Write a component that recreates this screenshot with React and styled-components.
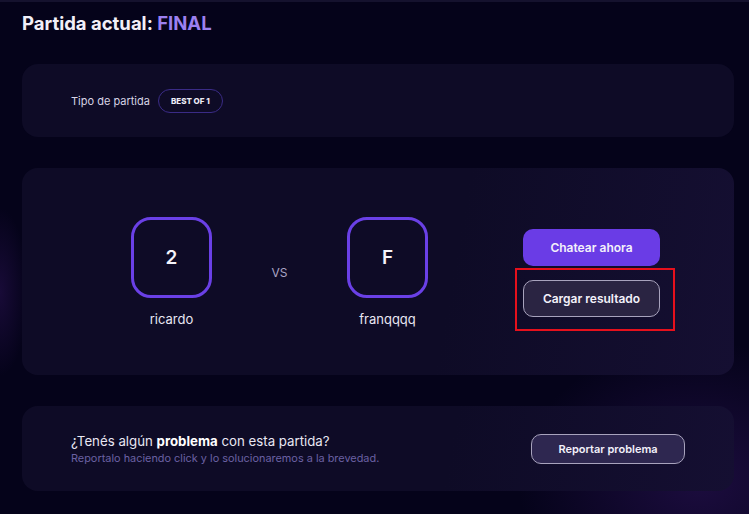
import styled, { createGlobalStyle } from 'styled-components'

const GlobalStyle = createGlobalStyle`
    body {
        margin: 0;
        background: #05031a;
        font-family: Inter, "Liberation Sans", sans-serif;
    }
`

export default function App() {
    return (
        <Page>
            <GlobalStyle />
            <Title>Partida actual: <span>FINAL</span></Title>

            <Card height={73}>
                <MatchType>
                    Tipo de partida
                    <Badge>BEST OF 1</Badge>
                </MatchType>
            </Card>

            <Card height={207} glow>
                <Matchup>
                    <Player>
                        <Avatar>2</Avatar>
                        <Name>ricardo</Name>
                    </Player>
                    <Versus>VS</Versus>
                    <Player>
                        <Avatar>F</Avatar>
                        <Name>franqqqq</Name>
                    </Player>
                    <Actions>
                        <Button primary>Chatear ahora</Button>
                        <Highlight>
                            <Button>Cargar resultado</Button>
                        </Highlight>
                    </Actions>
                </Matchup>
            </Card>

            <Card height={85} glow>
                <Problem>
                    <div>
                        <Question>¿Tenés algún <b>problema</b> con esta partida?</Question>
                        <Hint>Reportalo haciendo click y lo solucionaremos a la brevedad.</Hint>
                    </div>
                    <ReportButton>Reportar problema</ReportButton>
                </Problem>
            </Card>
        </Page>
    )
}

const Page = styled.div`
    width: 749px;
    height: 514px;
    box-sizing: border-box;
    padding: 10px 15px 0 22px;
    border-top: 2px solid #15122e;
    display: flex;
    flex-direction: column;
    gap: 31px;
    overflow: hidden;
    background:
        radial-gradient(ellipse 260px 200px at 700px 480px, rgba(70, 30, 130, 0.35), transparent 70%),
        radial-gradient(ellipse 40px 120px at 0px 290px, rgba(60, 25, 110, 0.35), transparent 70%),
        #05031a;
`

const Title = styled.h1`
    margin: 0 0 -1px 0;
    font-size: 18.5px;
    line-height: 22px;
    font-weight: 700;
    color: #f1eff8;
    span {
        color: #9c80f0;
    }
`

const Card = styled.div`
    height: ${p => p.height}px;
    border-radius: 16px;
    background: ${p => p.glow
        ? 'linear-gradient(100deg, #0e0b26 60%, #150f32 100%)'
        : '#0e0b26'};
    display: flex;
    align-items: center;
    flex-shrink: 0;
`

const MatchType = styled.div`
    padding-left: 49px;
    display: flex;
    align-items: center;
    gap: 8px;
    font-size: 11px;
    color: #d6d3e4;
`

const Badge = styled.span`
    height: 22px;
    padding: 0 12px;
    border: 1.5px solid #3a2b86;
    border-radius: 12px;
    display: flex;
    align-items: center;
    font-size: 8px;
    font-weight: 800;
    color: #ecebf5;
`

const Matchup = styled.div`
    padding-left: 109px;
    display: flex;
    align-items: center;
`

const Player = styled.div`
    width: 81px;
    display: flex;
    flex-direction: column;
    align-items: center;
`

const Avatar = styled.div`
    width: 81px;
    height: 81px;
    box-sizing: border-box;
    border: 3px solid #6a40e6;
    border-radius: 20px;
    display: flex;
    align-items: center;
    justify-content: center;
    font-size: 19px;
    font-weight: 600;
    color: #f4f3fa;
`

const Name = styled.div`
    margin-top: 13px;
    font-size: 13px;
    line-height: 16px;
    color: #e8e6f2;
    white-space: nowrap;
`

const Versus = styled.div`
    width: 135px;
    text-align: center;
    font-size: 12px;
    color: #a9a4c4;
    padding-top: 1px;
`

const Actions = styled.div`
    margin-left: 95px;
    display: flex;
    flex-direction: column;
    gap: 14px;
    padding-top: 2px;
`

const Button = styled.button`
    width: 137px;
    height: 37px;
    box-sizing: border-box;
    border-radius: 10px;
    border: ${p => p.primary ? 'none' : '1px solid #a8a3bd'};
    background: ${p => p.primary ? '#6a3ce6' : '#2a2442'};
    color: #f3f1fa;
    font-family: inherit;
    font-size: 12px;
    font-weight: 600;
`

const Highlight = styled.div`
    margin: -12px -15px -14px -8px;
    padding: 10px 13px 12px 6px;
    border: 2px solid #e6101c;
`

const Problem = styled.div`
    flex: 1;
    padding: 0 49px 0 49px;
    display: flex;
    align-items: center;
    justify-content: space-between;
`

const Question = styled.div`
    font-size: 13.25px;
    line-height: 18px;
    color: #e9e7f3;
    b {
        font-weight: 700;
        color: #ffffff;
    }
`

const Hint = styled.div`
    margin-top: 1px;
    font-size: 10.9px;
    line-height: 14px;
    color: #6b61a3;
`

const ReportButton = styled.button`
    width: 154px;
    height: 30px;
    box-sizing: border-box;
    border-radius: 10px;
    border: 1px solid #a8a3bd;
    background: #2e2750;
    color: #f3f1fa;
    font-family: inherit;
    font-size: 11px;
    font-weight: 600;
    margin-top: 1px;
`
